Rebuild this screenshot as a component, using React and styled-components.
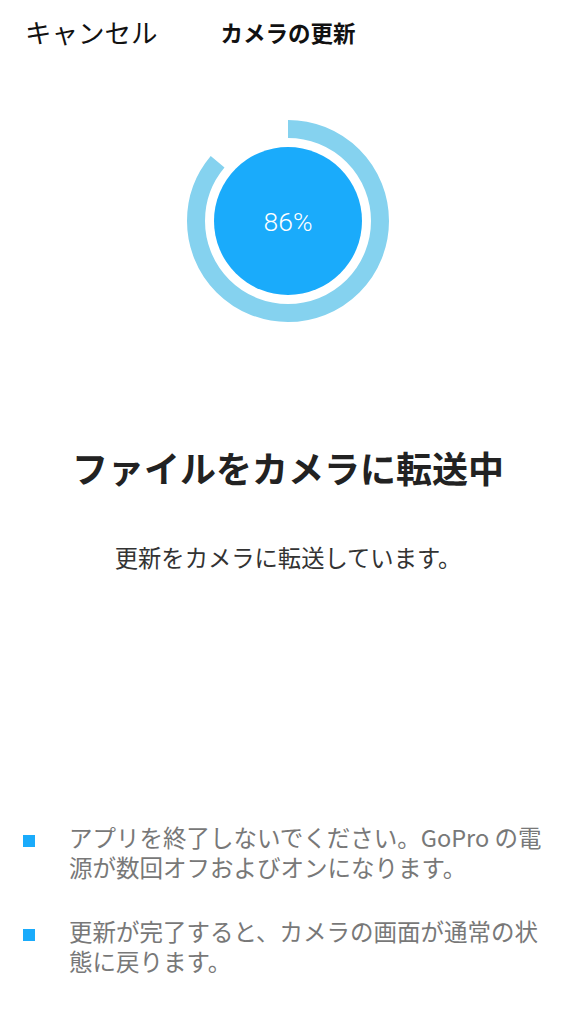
import React from 'react'
import styled, { createGlobalStyle } from 'styled-components'

const GlobalStyle = createGlobalStyle`
  html, body {
    margin: 0;
    padding: 0;
    background: #fff;
  }
  body {
    font-family: "Noto Sans CJK JP", "Noto Sans", sans-serif;
  }
`

const Screen = styled.div`
  width: 576px;
  min-height: 1024px;
  display: flex;
  flex-direction: column;
  align-items: center;
  background: #fff;
`

const Header = styled.div`
  width: 100%;
  height: 66px;
  display: grid;
  grid-template-columns: 1fr auto 1fr;
  align-items: center;
  box-sizing: border-box;
  padding: 0 25px;
`

const CancelButton = styled.div`
  font-size: 26.5px;
  color: #111;
  line-height: 1;
  margin-top: -2px;
`

const Title = styled.div`
  font-size: 22.5px;
  font-weight: 700;
  color: #111;
  line-height: 1;
  margin-top: -1px;
`

const Progress = styled.div`
  position: relative;
  width: 204px;
  height: 204px;
  margin-top: 53px;
`

const Percent = styled.div`
  position: absolute;
  inset: 0;
  display: flex;
  align-items: center;
  justify-content: center;
  color: #fff;
  font-family: Roboto, "Liberation Sans", sans-serif;
  font-weight: 300;
  font-size: 26.5px;
`

const Heading = styled.h1`
  margin: 119px 0 0;
  font-size: 36px;
  font-weight: 700;
  line-height: 50px;
  color: #222;
`

const Subtext = styled.p`
  margin: 49px 0 0;
  font-size: 23.3px;
  line-height: 32px;
  color: #333;
`

const Notes = styled.ul`
  list-style: none;
  margin: 249px 0 0;
  padding: 0;
  width: 100%;
  display: flex;
  flex-direction: column;
  gap: 34px;
`

const Note = styled.li`
  display: flex;
  padding-left: 23px;
  gap: 34px;
  font-size: 23.5px;
  line-height: 30px;
  color: #787878;
`

const Square = styled.span`
  flex: none;
  width: 12px;
  height: 12px;
  margin-top: 13px;
  background: #1aabfb;
`

const ProgressRing = ({ value }) => {
  const r = 92
  const c = 2 * Math.PI * r
  return (
    <svg width="204" height="204" viewBox="0 0 204 204">
      <circle
        cx="102"
        cy="102"
        r={r}
        fill="none"
        stroke="#85d2ef"
        strokeWidth="18"
        strokeDasharray={`${(c * value) / 100} ${c}`}
        transform="rotate(-90 102 102)"
      />
      <circle cx="102" cy="102" r="74" fill="#1aabfb" />
    </svg>
  )
}

export default function App() {
  const value = 86
  return (
    <Screen>
      <GlobalStyle />
      <Header>
        <CancelButton>キャンセル</CancelButton>
        <Title>カメラの更新</Title>
        <div />
      </Header>
      <Progress>
        <ProgressRing value={value} />
        <Percent>{value}%</Percent>
      </Progress>
      <Heading>ファイルをカメラに転送中</Heading>
      <Subtext>更新をカメラに転送しています。</Subtext>
      <Notes>
        <Note>
          <Square />
          <span>
            アプリを終了しないでください。GoPro の電<br />
            源が数回オフおよびオンになります。
          </span>
        </Note>
        <Note>
          <Square />
          <span>
            更新が完了すると、カメラの画面が通常の状<br />
            態に戻ります。
          </span>
        </Note>
      </Notes>
    </Screen>
  )
}
